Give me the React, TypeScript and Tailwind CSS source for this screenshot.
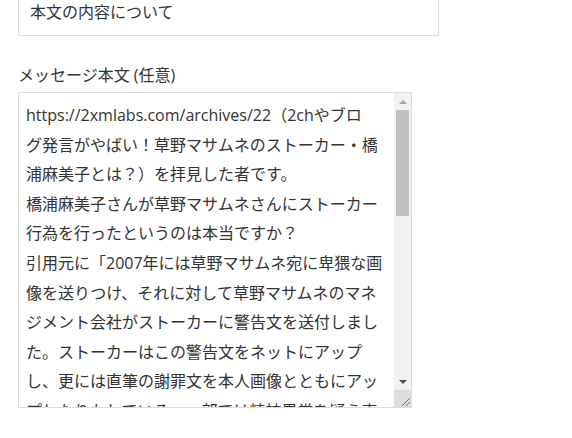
const lines = [
  'https://2xmlabs.com/archives/22（2chやブロ',
  'グ発言がやばい！草野マサムネのストーカー・橋',
  '浦麻美子とは？）を拝見した者です。',
  '橋浦麻美子さんが草野マサムネさんにストーカー',
  '行為を行ったというのは本当ですか？',
  '引用元に「2007年には草野マサムネ宛に卑猥な画',
  '像を送りつけ、それに対して草野マサムネのマネ',
  'ジメント会社がストーカーに警告文を送付しまし',
  'た。ストーカーはこの警告文をネットにアップ',
  'し、更には直筆の謝罪文を本人画像とともにアッ',
  'プしたりもしている。一部では精神異常を疑う声',
];

export default function App() {
  return (
    <div
      className="w-[572px] h-[438px] overflow-hidden bg-white text-[#333] text-[16px]"
      style={{ fontFamily: '"Open Sans", "Noto Sans CJK JP", sans-serif' }}
    >
      <div className="pl-[18px]">
        {/* 件名 */}
        <div className="w-[421px] h-[37px] -mt-[1px] border border-[#dcdcdc] border-t-0 bg-white pl-[11px] leading-[26px]">
          本文の内容について
        </div>

        {/* メッセージ本文 */}
        <div className="mt-[26px] leading-[26px]">メッセージ本文 (任意)</div>

        <div className="mt-[4px] w-[394px] h-[316px] border border-[#dcdcdc] bg-white flex overflow-hidden">
          <div className="flex-1 pl-[7px] pt-[8px] leading-[29.6px] whitespace-nowrap overflow-hidden">
            {lines.map((l, i) => (
              <div key={i}>{l}</div>
            ))}
          </div>

          {/* scrollbar */}
          <div className="w-[17px] h-full bg-[#f1f1f1] flex flex-col">
            <div className="h-[17px] flex items-center justify-center">
              <div className="w-0 h-0 border-x-[4px] border-x-transparent border-b-[4px] border-b-[#a3a3a3]" />
            </div>
            <div className="mx-[2px] h-[106px] bg-[#c1c1c1]" />
            <div className="flex-1" />
            <div className="h-[17px] flex items-center justify-center">
              <div className="w-0 h-0 border-x-[4px] border-x-transparent border-t-[4px] border-t-[#505050]" />
            </div>
            <div className="h-[17px] bg-[#dcdcdc] flex items-end justify-end">
              <svg width="12" height="12" viewBox="0 0 12 12">
                <path d="M11 3 L3 11 M11 7 L7 11" stroke="#6e6e6e" strokeWidth="1" />
              </svg>
            </div>
          </div>
        </div>
      </div>
    </div>
  );
}
